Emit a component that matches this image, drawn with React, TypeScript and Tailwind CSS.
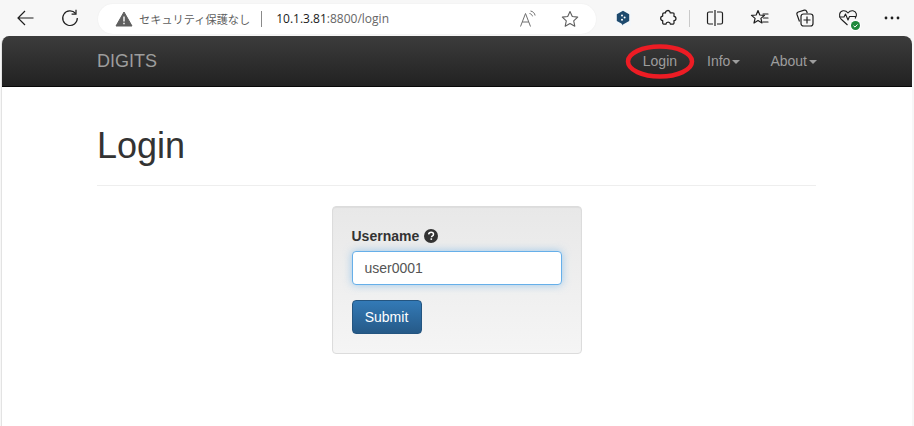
import React from "react";

const Stroke = "#1f1f1f";

function Back() {
  return (
    <svg width="20" height="20" viewBox="0 0 20 20" fill="none" stroke={Stroke} strokeWidth="1.2">
      <path d="M17.500 10H2M9 3L2 10l7 7" />
    </svg>
  );
}
function Reload() {
  return (
    <svg width="20" height="20" viewBox="0 0 20 20" fill="none" stroke={Stroke} strokeWidth="1.2">
      <path d="M15.600 5.500A7.300 7.300 0 1 0 17.300 10" />
      <path d="M16 1.800v4.400h-4.400" />
    </svg>
  );
}
function Warn() {
  return (
    <svg width="18" height="16" viewBox="0 0 18 16">
      <path d="M9 1L17 15H1z" fill="#5f5f5f" stroke="#5f5f5f" strokeWidth="1" strokeLinejoin="round" />
      <path d="M9 5.500v5M9 11.800v1.400" stroke="#fff" strokeWidth="1.400" />
    </svg>
  );
}
function ReadAloud() {
  return (
    <svg width="18" height="18" viewBox="0 0 18 18" fill="none" stroke="#6f6f6f" strokeWidth="1">
      <path d="M1.500 16.500L6.500 3.500l5 13M3.200 12h6.600" />
      <path d="M10.500 3.500c1.600.3 2.600 1.300 3 2.800M11.500 1c2.500.4 4.200 2.200 4.600 4.500" />
    </svg>
  );
}
function Star() {
  return (
    <svg width="18" height="18" viewBox="0 0 18 18" fill="none" stroke="#5f5f5f" strokeWidth="1.100">
      <path d="M9 1.500l2.300 5 5.400.6-4 3.700 1.100 5.400L9 13.500l-4.800 2.700 1.100-5.400-4-3.700 5.400-.6z" strokeLinejoin="round" />
    </svg>
  );
}
function Ext() {
  return (
    <svg width="16" height="16" viewBox="0 0 16 16" fill="#1d4a6e">
      <rect width="16" height="16" fill="#f4f7fa" />
      <path d="M8 .8l6.200 3.400v6.700L8 14.400v1.200L6.400 13.600 1.800 10.900V4.200z" />
      <circle cx="7" cy="5.500" r="1" fill="#fff" />
      <circle cx="9.600" cy="7.600" r="1" fill="#fff" />
      <circle cx="7" cy="9.700" r="1" fill="#fff" />
    </svg>
  );
}
function Puzzle() {
  return (
    <svg width="18" height="18" viewBox="0 0 20 20" fill="none" stroke={Stroke} strokeWidth="1.400" strokeLinejoin="round">
      <path d="M7.200 4.400C7 1 12.200.6 12.400 4.200c1.500.3 3.300-.4 4 .5.700 1 .2 2.400.2 3.400 3 .2 3 4.600 0 4.900 0 1.200.5 2.800-.3 3.500-.9.800-2.400.3-3.600.3-.4-2.900-4.700-2.900-5 0-1.100 0-2.400.4-3.200-.3-.8-.8-.2-2.300-.4-3.500-3-.4-3-5 0-5.200.1-1 -.3-2.400.4-3.100.8-.7 2.200-.2 2.700-.3z" />
    </svg>
  );
}
function Split() {
  return (
    <svg width="18" height="18" viewBox="0 0 18 18" fill="none" stroke={Stroke} strokeWidth="1.200">
      <path d="M7 3H3a1.500 1.500 0 0 0-1.500 1.500v9A1.500 1.500 0 0 0 3 15h4M11 3h4a1.500 1.500 0 0 1 1.500 1.500v9A1.500 1.500 0 0 1 15 15h-4M9 1v16" />
    </svg>
  );
}
function Favs() {
  return (
    <svg width="20" height="20" viewBox="0 0 20 20" fill="none" stroke={Stroke} strokeWidth="1.200" strokeLinejoin="round">
      <path d="M8 2.500l1.800 4.500 4.700.4-3.600 3 1.100 4.600L8 12.500l-4 2.500 1.100-4.600-3.600-3 4.700-.4z" />
      <path d="M13 6h5M13.500 10H18M13 14h5" strokeLinecap="round" />
    </svg>
  );
}
function Collections() {
  return (
    <svg width="20" height="20" viewBox="0 0 20 20" fill="none" stroke={Stroke} strokeWidth="1.200">
      <path d="M4.500 13.500L2 6.500a2 2 0 0 1 1.300-2.500l6-1.800A2 2 0 0 1 11.700 3.500l.6 1.800" />
      <rect x="6" y="6" width="12" height="12" rx="2.500" />
      <path d="M12 8.500v7M8.500 12h7" />
    </svg>
  );
}
function Health() {
  return (
    <div className="relative w-5 h-5">
      <svg width="20" height="20" viewBox="0 0 20 20" fill="none" stroke={Stroke} strokeWidth="1.100" strokeLinejoin="round">
        <path d="M9.500 17L3 11C.5 8 1.200 3.500 5 2.800c2-.3 3.800.6 5 2.200 1.200-1.600 3-2.500 5-2.200 3.800.7 4.500 5.200 2 7.700" />
        <path d="M1.500 9h4.500l1.500-3 2.500 6 1.500-3.500h6.500" />
      </svg>
      <svg className="absolute right-[-3px] bottom-[-3px]" width="11" height="11" viewBox="0 0 11 11">
        <circle cx="5.500" cy="5.500" r="5.500" fill="#fff" />
        <circle cx="5.500" cy="5.500" r="4.500" fill="#1f8a3b" />
        <path d="M3.500 5.700l1.500 1.400 2.500-2.700" fill="none" stroke="#fff" strokeWidth="1" />
      </svg>
    </div>
  );
}
function Dots() {
  return (
    <svg width="16" height="4" viewBox="0 0 16 4" fill={Stroke}>
      <circle cx="2" cy="2" r="1.400" />
      <circle cx="8" cy="2" r="1.400" />
      <circle cx="14" cy="2" r="1.400" />
    </svg>
  );
}
function Caret() {
  return <span className="inline-block ml-[2px] align-middle w-0 h-0 border-x-[4px] border-x-transparent border-t-[4px] border-t-[#9d9d9d]" />;
}
function Help() {
  return (
    <svg width="14" height="14" viewBox="0 0 14 14" className="inline-block">
      <circle cx="7" cy="7" r="7" fill="#333" />
      <path d="M4.600 5.400C4.800 3.900 5.800 3.200 7.100 3.200c1.400 0 2.400.8 2.400 2 0 1-.6 1.500-1.300 1.900-.5.300-.7.500-.7 1.100" fill="none" stroke="#fff" strokeWidth="1.500" />
      <rect x="6.500" y="9.300" width="1.600" height="1.600" fill="#fff" />
    </svg>
  );
}

export default function App() {
  return (
    <div className="relative w-[914px] h-[426px] overflow-hidden bg-[#f7f7f7] flex flex-col font-['Liberation_Sans',sans-serif]">
      <div className="h-9 flex items-center shrink-0">
        <div className="w-[26px] ml-[13px] flex justify-center"><Back /></div>
        <div className="w-5 ml-[21px] flex justify-center"><Reload /></div>
        <div className="ml-[18px] w-[498px] h-[30px] mt-[2px] rounded-full bg-white flex items-center pl-[17px] shadow-[0_0_2px_rgba(0,0,0,0.05)]">
          <Warn />
          <span className="ml-[6px] text-[11.200px] text-[#5f5f5f] font-['Noto_Sans_CJK_JP',sans-serif]">セキュリティ保護なし</span>
          <span className="ml-[11px] w-px h-4 bg-[#8a8a8a]" />
          <span className="ml-[14px] text-[12px] text-[#1a1a1a] font-['Open_Sans',sans-serif]">10.1.3.81<span className="text-[#666]">:8800/login</span></span>
          <div className="ml-auto mr-[17px] flex items-center gap-[24px]">
            <ReadAloud />
            <Star />
          </div>
        </div>
        <div className="ml-[19px] w-4 flex justify-center"><Ext /></div>
        <div className="ml-[28px] flex"><Puzzle /></div>
        <span className="ml-[12px] w-px h-[17px] bg-[#c9c9c9]" />
        <div className="ml-[16px] flex"><Split /></div>
        <div className="ml-[26px] flex"><Favs /></div>
        <div className="ml-[25px] flex"><Collections /></div>
        <div className="ml-[23px] flex"><Health /></div>
        <div className="ml-[26px] flex"><Dots /></div>
      </div>
      <div className="flex-1 ml-[1px] mr-[2px] rounded-t-[8px] bg-white border-l border-[#e3e3e3] flex flex-col overflow-hidden">
        <nav className="h-[51px] shrink-0 bg-gradient-to-b from-[#3c3c3c] to-[#222222] border-b border-[#080808] pl-[95px] pr-[95px] flex items-center">
          <span className="text-[18px] text-[#9d9d9d]">DIGITS</span>
          <div className="ml-auto flex items-center text-[14px] text-[#9d9d9d]">
            <span>Login</span>
            <span className="ml-[30px]">Info<Caret /></span>
            <span className="ml-[30px]">About<Caret /></span>
          </div>
        </nav>
        <main className="flex-1 pl-[95px] pr-[96px]">
          <div className="pt-[35px] pb-[16px] border-b border-[#eeeeee]">
            <h1 className="text-[36px] leading-[47px] text-[#333333] font-normal">Login</h1>
          </div>
          <div className="flex justify-center mt-[20px]">
            <div className="w-[250px] h-[148px] rounded border border-[#dcdcdc] bg-gradient-to-b from-[#e8e8e8] to-[#f5f5f5] p-[19px] shadow-[inset_0_1px_1px_rgba(0,0,0,0.05)]">
              <label className="flex items-center gap-[5px] text-[14px] leading-[20px] font-bold text-[#333333]">
                Username <Help />
              </label>
              <div className="mt-[5px] h-[34px] rounded bg-white border border-[#66afe9] px-3 flex items-center text-[14px] text-[#555555] shadow-[0_0_8px_rgba(102,175,233,0.6)]">
                user0001
              </div>
              <button className="mt-[15px] block w-[70px] h-[34px] rounded border border-[#245580] bg-gradient-to-b from-[#337ab7] to-[#265a88] text-white text-[14px]">
                Submit
              </button>
            </div>
          </div>
        </main>
      </div>
      <svg className="absolute left-[625px] top-[44px]" width="72" height="36" viewBox="0 0 72 36" fill="none">
        <ellipse cx="35" cy="17.500" rx="32" ry="15" stroke="#ed1c24" strokeWidth="4.500" />
      </svg>
    </div>
  );
}
